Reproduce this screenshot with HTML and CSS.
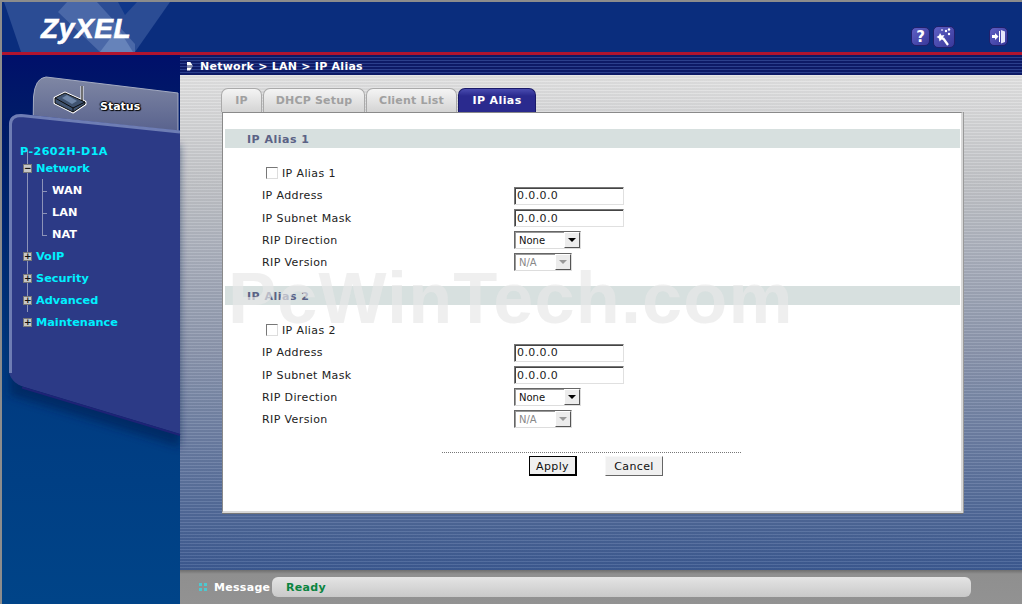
FILE: index.html
```html
<!DOCTYPE html>
<html lang="en">
<head>
<meta charset="utf-8">
<title>IP Alias</title>
<link rel="stylesheet" href="styles.css">
</head>
<body>
<div class="app">
  <header class="top">
    <svg class="logo-art" viewBox="0 0 180 50" aria-hidden="true">
      <polygon points="2,0 168,0 133,50 19,50" fill="#2b4c94"/>
      <polygon points="65,0 95,0 133,42 133,50 98,50 56,10" fill="#4a68a8"/>
      <polygon points="116,26 98,50 131,50" fill="#6683ba"/>
      <polygon points="116,0 135,0 123,13" fill="#0f378a"/>
    </svg>
    <div class="logo">ZyXEL</div>
    <div class="tools">
      <span class="tool">
        <svg viewBox="0 0 17 17"><text x="8.500" y="14" class="tool-q">?</text></svg>
      </span>
      <span class="tool tool--wide">
        <svg viewBox="0 0 20 20"><path d="M6 6l1.500 2.500 3-.5-1.500 2.500 1.500 2.500-3-.5-2 2-.5-3-2.500-1.500 2.500-1.500z" fill="#fff"/><path d="M9 11l5 7" stroke="#fff" stroke-width="2.200"/><circle cx="8" cy="3" r="1" fill="#c8c8f0"/><circle cx="12" cy="4" r="1.200" fill="#fff"/><circle cx="15" cy="2.500" r="1.200" fill="#fff"/><circle cx="15" cy="7" r="1.200" fill="#fff"/></svg>
      </span>
      <span class="tool tool--last">
        <svg viewBox="0 0 17 17"><path d="M2 7h3V5l3.500 3.500L5 12v-2H2z" fill="#fff"/><path d="M9.500 3v11" stroke="#fff"/><path d="M11 2l4 1.500v10.500l-4 1.500z" fill="#e6e6fa"/></svg>
      </span>
    </div>
  </header>
  <div class="redline"></div>
  <div class="body">
    <aside class="side">
      <svg class="side-art" viewBox="0 0 178 385" aria-hidden="true">
        <defs>
          <linearGradient id="statusFill" x1="0" y1="0" x2="0" y2="1">
            <stop offset="0" stop-color="#7f87a4"/>
            <stop offset="1" stop-color="#4f5988"/>
          </linearGradient>
          <filter id="soft" x="-10%" y="-10%" width="120%" height="125%">
            <feGaussianBlur stdDeviation="4"/>
          </filter>
        </defs>
        <path d="M31 80 L31.500 42 Q33 23 44 22 L176 38 V90 H31 Z" fill="url(#statusFill)" stroke="#a4abc2" stroke-width="1"/>
        <path d="M8 340 L178 392 V90 L8 70 Z" fill="#001a50" opacity=".55" filter="url(#soft)"/>
        <path d="M7 68 Q8 59 19 59 L178 76 V379 L22 332 Q8 327 7 316 Z" fill="#2c3a86"/>
        <path d="M8.500 318 V69 Q9 60.500 19 60.500 L178 77" fill="none" stroke="#6e7db4" stroke-width="3"/>
        <path d="M20 332.500 L178 380" fill="none" stroke="#1e2376" stroke-width="2"/>
        <g fill="none" stroke-linejoin="round">
          <path d="M80 46 V31" stroke="#fff" stroke-width="3"/>
          <path d="M53 43 L63 38 L83 47 L83 49 L71 57 L53 48 Z" stroke="#fff" stroke-width="3"/>
          <path d="M80 46 V31" stroke="#111" stroke-width="1.200"/>
          <path d="M53 43 L63 38 L83 47 L83 49 L71 57 L53 48 Z" fill="#3f5370" stroke="#0c0c0c" stroke-width="1"/>
          <path d="M53 43 L71 53 L83 47 M71 53 V57" stroke="#0c0c0c" stroke-width="1"/>
          <path d="M60 43 L65 40 L75 46 L70 49 Z" fill="#6f86a8"/>
        </g>
      </svg>
      <div class="status-label">Status</div>
      <nav class="tree">
        <div class="device">P-2602H-D1A</div>
        <ul class="root">
          <li class="node">
            <div class="node-head"><span class="toggle">&minus;</span><a class="cyan">Network</a></div>
            <ul class="sub">
              <li>WAN</li>
              <li>LAN</li>
              <li>NAT</li>
            </ul>
          </li>
          <li class="node"><div class="node-head"><span class="toggle">+</span><a class="cyan">VoIP</a></div></li>
          <li class="node"><div class="node-head"><span class="toggle">+</span><a class="cyan">Security</a></div></li>
          <li class="node"><div class="node-head"><span class="toggle">+</span><a class="cyan">Advanced</a></div></li>
          <li class="node"><div class="node-head"><span class="toggle">+</span><a class="cyan">Maintenance</a></div></li>
        </ul>
      </nav>
    </aside>
    <main class="main">
      <div class="crumb"><span class="crumb-mark"></span>Network &gt; LAN &gt; IP Alias</div>
      <div class="stage">
        <div class="tabs">
          <span class="tab tab--ip">IP</span>
          <span class="tab tab--dhcp">DHCP Setup</span>
          <span class="tab tab--client">Client List</span>
          <span class="tab tab--active">IP Alias</span>
        </div>
        <section class="panel">
          <h2 class="band">IP Alias 1</h2>
          <div class="fields">
            <label class="check"><input type="checkbox">IP Alias 1</label>
            <div class="row row--tall"><span>IP Address</span><input class="text" value="0.0.0.0"></div>
            <div class="row"><span>IP Subnet Mask</span><input class="text" value="0.0.0.0"></div>
            <div class="row"><span>RIP Direction</span><span class="sel"><select><option>None</option></select><i class="arrow"></i></span></div>
            <div class="row"><span>RIP Version</span><span class="sel sel--off"><select disabled><option>N/A</option></select><i class="arrow"></i></span></div>
          </div>
          <h2 class="band band--two">IP Alias 2</h2>
          <div class="fields">
            <label class="check"><input type="checkbox">IP Alias 2</label>
            <div class="row row--tall"><span>IP Address</span><input class="text" value="0.0.0.0"></div>
            <div class="row"><span>IP Subnet Mask</span><input class="text" value="0.0.0.0"></div>
            <div class="row"><span>RIP Direction</span><span class="sel"><select><option>None</option></select><i class="arrow"></i></span></div>
            <div class="row"><span>RIP Version</span><span class="sel sel--off"><select disabled><option>N/A</option></select><i class="arrow"></i></span></div>
          </div>
          <div class="actions">
            <button class="btn btn--default">Apply</button>
            <button class="btn btn--cancel">Cancel</button>
          </div>
          <div class="watermark">PcWinTech.com</div>
        </section>
      </div>
      <footer class="msg">
        <span class="msg-mark"></span>
        <span class="msg-label">Message</span>
        <div class="msg-field">Ready</div>
      </footer>
    </main>
  </div>
</div>
</body>
</html>
```
FILE: styles.css
```css
* { box-sizing: border-box; }
html, body { margin: 0; height: 100%; overflow: hidden; }
body { font-family: "DejaVu Sans", Verdana, sans-serif; font-size: 11px; color: #222; }

.app { width: 1022px; height: 604px; display: flex; flex-direction: column; border-top: 2px solid #8c8c8c; border-left: 2px solid #8c8c8c; }

.top { height: 50px; flex: none; background: #0a2d7d; position: relative; display: flex; justify-content: flex-end; }
.logo-art { position: absolute; left: 0; top: 0; width: 180px; height: 50px; }
.logo { position: absolute; left: 39px; top: 11px; font: italic bold 28px "Liberation Sans", Arial, sans-serif; color: #fff; letter-spacing: .6px; -webkit-text-stroke: .6px #fff; }
.tools { display: flex; align-items: flex-start; gap: 3px; padding: 24px 14px 0 0; height: 50px; }
.tool { width: 19px; height: 19px; margin-top: 1px; border-radius: 5px; border: 1px solid #20206c; background: linear-gradient(135deg, #5f60c4, #38389a); display: block; }
.tool svg { display: block; width: 17px; height: 17px; }
.tool--wide { width: 22px; height: 22px; margin-top: 0; }
.tool--wide svg { width: 20px; height: 20px; }
.tool--last { margin-left: 31px; }
.tool-q { font: bold 15px "DejaVu Sans", sans-serif; fill: #fff; text-anchor: middle; }

.redline { height: 3px; flex: none; background: #b0142f; }

.body { flex: 1; display: flex; min-height: 0; }

.side { width: 178px; flex: none; position: relative; background: linear-gradient(#00106a 0, #001a68 10%, #003a80 55%, #004488 100%); }
.side-art { position: absolute; left: 0; top: 0; width: 178px; height: 385px; overflow: visible; }
.status-label { position: absolute; left: 98px; top: 45px; font-weight: bold; font-size: 11px; color: #fff; text-shadow: 1px 1px 1px #000, -1px 0 1px #000, 0 -1px 1px #000, 1px 0 1px #000; }
.tree { position: relative; padding: 90px 0 0 18px; }
.device { height: 14px; line-height: 14px; font-weight: bold; font-size: 11.200px; color: #00f0ff; letter-spacing: .4px; }
.root { list-style: none; margin: -1px 0 0 3px; padding: 0; position: relative; }
.root::before { content: ""; position: absolute; left: 4px; top: -8px; height: 162px; width: 1px; background: #8c93b8; }
.node { position: relative; }
.node-head { height: 22px; line-height: 22px; }
.toggle { position: absolute; left: 0; top: 6px; width: 9px; height: 9px; background: #c6c6c6; border: 1px solid #777; color: #111; font: bold 9px/7px "DejaVu Sans", sans-serif; text-align: center; }
.cyan { color: #00f0ff; font-weight: bold; font-size: 11.300px; margin-left: 13px; }
.sub { list-style: none; margin: 0 0 0 16px; padding: 0 0 0 13px; color: #fff; font-weight: bold; font-size: 11.300px; position: relative; }
.sub::before { content: ""; position: absolute; left: 3px; top: -1px; width: 1px; background: #8c93b8; height: 56px; }
.sub li { position: relative; height: 22px; line-height: 22px; }
.sub li::before { content: ""; position: absolute; left: -10px; top: 11px; width: 5px; height: 1px; background: #8c93b8; }

.main { flex: 1; min-width: 0; display: flex; flex-direction: column; }
.crumb { height: 20px; flex: none; display: flex; align-items: center; gap: 7px; padding: 2px 0 0 7px; color: #fff; font-weight: bold; font-size: 11px; letter-spacing: .25px; background: repeating-linear-gradient(#0d1a66 0 2px, #2b3f8c 2px 3px); }
.crumb-mark { width: 6px; height: 9px; background: linear-gradient(#fff 0 3px, #8890b0 3px 6px, #fff 6px); clip-path: polygon(0 0, 50% 0, 100% 50%, 50% 100%, 0 100%); }

.stage { flex: 1; min-height: 0; padding: 13px 59px 0 42px; background: repeating-linear-gradient(rgba(255,255,255,.1) 0 1px, rgba(0,0,0,.04) 1px 3px), linear-gradient(#e4e4e4 0, #c2c4c8 22%, #8d97ae 55%, #3c5a92 100%); }
.tabs { display: flex; gap: 1px; height: 24px; margin-left: -1px; }
.tab { height: 24px; padding-top: 5px; border-radius: 7px 7px 0 0; text-align: center; font-weight: bold; color: #a0a0a0; background: linear-gradient(#f4f4f4, #d4d4d4); border: 1px solid #aaa; border-bottom: none; font-size: 11px; letter-spacing: .2px; }
.tab--ip { width: 41px; }
.tab--dhcp { width: 102px; }
.tab--client { width: 91px; }
.tab--active { width: 78px; color: #fff; letter-spacing: .4px; background: linear-gradient(#4a4cb0 0, #2a2a8e 30%); border-color: #1a1a6a; }

.panel { width: 741px; height: 401px; background: #fff; border: 1px solid #8a8a8a; border-right: 2px solid #d8d8d8; border-bottom: 2px solid #d8d8d8; position: relative; padding: 16px 0 0 2px; box-shadow: 0 1px 0 #777, 1px 0 0 #999; letter-spacing: .38px; }
.band { margin: 0; height: 19px; width: 735px; background: #d7e0df; color: #5b6285; font-size: 11px; line-height: 21px; padding-left: 22px; letter-spacing: .5px; }
.band--two { margin-top: 13px; }
.fields { padding: 14px 0 0 37px; display: flex; flex-direction: column; }
.check { height: 22px; display: flex; align-items: center; padding: 1px 0 0 4px; gap: 4px; }
.check input { appearance: none; width: 12px; height: 12px; margin: 0 0 2px; background: #fff; border: 1px solid #777; border-right-color: #ddd; border-bottom-color: #ddd; }
.row { height: 22px; display: flex; align-items: center; }
.row--tall { height: 23px; }
.row > span:first-child { width: 252px; flex: none; }
.text { width: 110px; height: 18px; border: 1px solid; border-color: #777 #e0e0e0 #e0e0e0 #777; padding: 0 1px 0 2px; font: 11px "DejaVu Sans", sans-serif; letter-spacing: .38px; color: #222; box-shadow: inset 1px 1px 0 #444; outline: none; }
.sel { position: relative; display: block; width: 67px; height: 18px; }
.sel select { appearance: none; width: 100%; height: 100%; font: 10px "DejaVu Sans", sans-serif; color: #111; padding: 0 0 0 4px; background: #fff; border: 1px solid; border-color: #666 #ddd #ddd #666; box-shadow: inset 1px 1px 0 #999; border-radius: 0; opacity: 1; }
.arrow { position: absolute; right: 1px; top: 1px; width: 16px; height: 16px; background: #ececec; border: 1px solid; border-color: #fff #555 #555 #fff; }
.arrow::after { content: ""; position: absolute; left: 3px; top: 5px; border: 4px solid transparent; border-top: 4px solid #000; border-bottom: none; }
.sel--off { width: 58px; }
.sel--off select { color: #888; background: #fff; }
.sel--off .arrow::after { border-top-color: #999; }

.actions { width: 299px; margin: 22px 0 0 217px; padding: 3px 0 0 87px; border-top: 1px dotted #777; display: flex; gap: 28px; }
.btn { height: 20px; font: 11px "DejaVu Sans", sans-serif; letter-spacing: .38px; color: #111; background: #f0f0f0; padding: 1px 0 0; border: 1px solid; border-color: #f8f8f8 #666 #666 #f8f8f8; }
.btn--default { width: 48px; outline: 1px solid #000; outline-offset: -1px; border: 2px solid #000; border-top-width: 1px; border-left-width: 1px; }
.btn--cancel { width: 58px; }

.watermark { position: absolute; left: 5px; top: 144px; font: bold 72px "Liberation Sans", Arial, sans-serif; color: rgba(232,232,232,.68); white-space: nowrap; letter-spacing: 1.200px; pointer-events: none; }

.msg { height: 34px; flex: none; background: linear-gradient(#6e6e6e 0, #8f8f8f 4px, #929292 100%); display: flex; align-items: center; padding: 0 51px 0 19px; }
.msg-mark { width: 8px; height: 8px; margin-right: 7px; background: conic-gradient(from 270deg at 3px 3px, #4dc8d0 25%, transparent 0) 0 0 / 5px 5px; }
.msg-label { color: #fff; font-weight: bold; font-size: 11px; width: 58px; flex: none; letter-spacing: .3px; white-space: nowrap; }
.msg-field { flex: 1; height: 20px; line-height: 21px; margin-top: -1px; border-radius: 6px; background: linear-gradient(#e4e4e4, #c9c9c9); padding-left: 14px; color: #0a8440; font-weight: bold; font-size: 11px; letter-spacing: .3px; }
```
